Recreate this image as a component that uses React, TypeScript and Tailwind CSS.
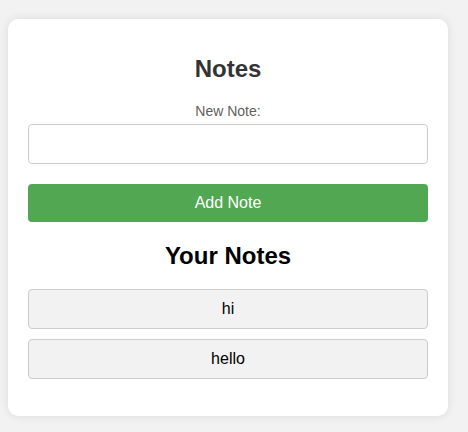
export default function App() {
  const notes = ['hi', 'hello'];

  return (
    <div className="min-h-screen bg-[#f2f2f2] pt-[19px] pl-2 font-['Liberation_Sans',Arial,sans-serif]">
      <div className="w-[440px] bg-white rounded-[10px] shadow-[0_0_10px_rgba(0,0,0,0.1)] px-5 pt-[36px] pb-[37px]">
        <h2 className="text-center text-[24px] leading-[28px] font-bold text-[#333]">Notes</h2>

        <label className="block mt-[20px] text-center text-[14px] leading-[16px] text-[#5f5f5f]">New Note:</label>
        <input
          type="text"
          className="block mt-[5px] w-full h-[40px] border border-[#ccc] rounded-[4px] px-2 text-[16px] outline-none"
        />

        <button className="block mt-[20px] w-full h-[38px] bg-[#52a752] rounded-[4px] text-white text-[16px]">
          Add Note
        </button>

        <h2 className="mt-[20px] text-center text-[24px] leading-[28px] font-bold text-black">Your Notes</h2>

        <div className="mt-[19px] flex flex-col gap-[10px]">
          {notes.map((n) => (
            <div
              key={n}
              className="h-[40px] flex items-center justify-center bg-[#f2f2f2] border border-[#ccc] rounded-[4px] text-[16px] text-black"
            >
              {n}
            </div>
          ))}
        </div>
      </div>
    </div>
  );
}
